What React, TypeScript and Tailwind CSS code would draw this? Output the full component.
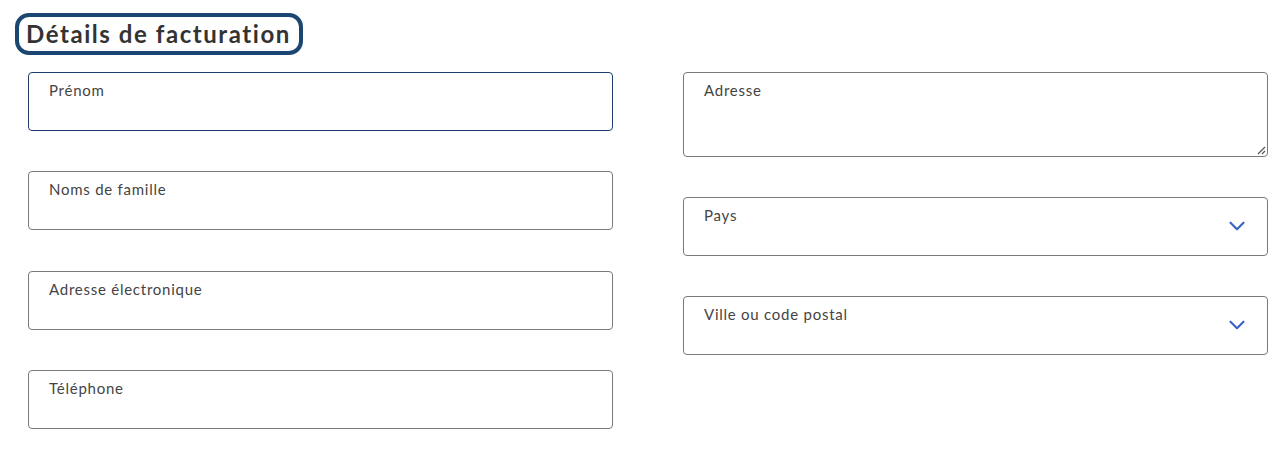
import { ChevronDown } from "lucide-react";

const leftFields = ["Prénom", "Noms de famille", "Adresse électronique", "Téléphone"];

const labelCls = "absolute left-[20px] top-[6px] text-[15px] tracking-[0.05em] text-[#444]";

const Field = ({ label, focused }: { label: string; focused?: boolean }) => (
  <div
    className={`relative h-[59px] rounded-[4px] border bg-white ${
      focused ? "border-[#1f3b6b]" : "border-[#7a7a7a]"
    }`}
  >
    <span className={labelCls}>{label}</span>
  </div>
);

const SelectField = ({ label }: { label: string }) => (
  <div className="relative h-[59px] rounded-[4px] border border-[#7a7a7a] bg-white">
    <span className={labelCls}>{label}</span>
    <ChevronDown
      className="absolute right-[17px] top-[15px] h-[26px] w-[26px] text-[#3b63c9]"
      strokeWidth={2}
    />
  </div>
);

export default function App() {
  return (
    <div
      className="min-h-[450px] w-[1283px] bg-white px-[15px] pt-[13px]"
      style={{ fontFamily: "Lato, 'Noto Sans', sans-serif" }}
    >
      <div className="inline-flex h-[42px] items-center rounded-[14px] border-[4px] border-[#1b4672] pl-[7px] pr-[8px]">
        <h2 className="text-[24px] font-bold tracking-[0.065em] text-[#333]">Détails de facturation</h2>
      </div>

      <div className="mt-[17px] grid grid-cols-[585px_585px] gap-x-[70px] pl-[13px]">
        <div className="flex flex-col gap-[40.3px]">
          {leftFields.map((f, i) => (
            <Field key={f} label={f} focused={i === 0} />
          ))}
        </div>

        <div className="flex flex-col">
          <div className="relative h-[85px] rounded-[4px] border border-[#7a7a7a] bg-white">
            <span className={labelCls}>Adresse</span>
            <svg className="absolute bottom-[1px] right-[1px]" width="10" height="10" viewBox="0 0 10 10">
              <path d="M9 2 L2 9 M9 6 L6 9" stroke="#555" strokeWidth="1.2" />
            </svg>
          </div>
          <div className="mt-[40px]">
            <SelectField label="Pays" />
          </div>
          <div className="mt-[40px]">
            <SelectField label="Ville ou code postal" />
          </div>
        </div>
      </div>
    </div>
  );
}
